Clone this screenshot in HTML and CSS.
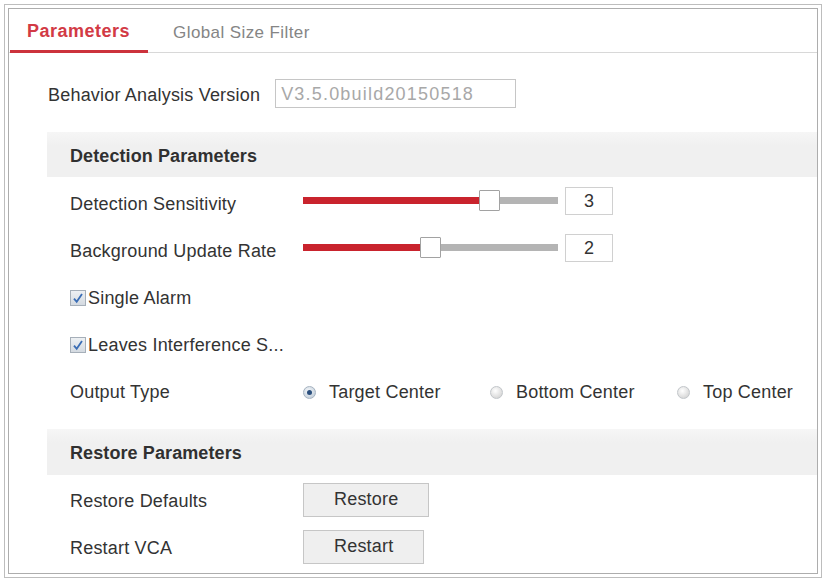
FILE: index.html
```html
<!DOCTYPE html>
<html>
<head>
<meta charset="utf-8">
<link rel="stylesheet" href="styles.css">
</head>
<body>
<div class="frame">
  <div class="panel">
    <div class="tabs">
      <div class="tab active">Parameters</div>
      <div class="tab">Global Size Filter</div>
    </div>
    <div class="content">
      <div class="version-row">
        <span class="version-label">Behavior Analysis Version</span>
        <div class="input-box">V3.5.0build20150518</div>
      </div>

      <div class="section-title">Detection Parameters</div>
      <div class="rows">
        <div class="row">
          <div class="label">Detection Sensitivity</div>
          <div class="slider-control">
            <div class="slider">
              <div class="track"><div class="fill" style="width:186px"></div></div>
              <div class="thumb" style="left:176px"></div>
            </div>
            <div class="value-box">3</div>
          </div>
        </div>
        <div class="row">
          <div class="label">Background Update Rate</div>
          <div class="slider-control">
            <div class="slider">
              <div class="track"><div class="fill" style="width:127px"></div></div>
              <div class="thumb" style="left:117px"></div>
            </div>
            <div class="value-box">2</div>
          </div>
        </div>
        <div class="row">
          <div class="check-label">
            <svg class="checkbox" width="16" height="16" viewBox="0 0 16 16"><defs><linearGradient id="cbg1" x1="0" y1="0" x2="0" y2="1"><stop offset="0" stop-color="#eef1f4"/><stop offset="1" stop-color="#d3d9e0"/></linearGradient></defs><rect x="0.5" y="0.5" width="15" height="15" fill="url(#cbg1)" stroke="#a6afb9"/><path d="M4 8.6 L6.7 11.8 L12 4" fill="none" stroke="#3a6db5" stroke-width="1.8"/></svg>
            <span class="text">Single Alarm</span>
          </div>
        </div>
        <div class="row">
          <div class="check-label">
            <svg class="checkbox" width="16" height="16" viewBox="0 0 16 16"><defs><linearGradient id="cbg2" x1="0" y1="0" x2="0" y2="1"><stop offset="0" stop-color="#eef1f4"/><stop offset="1" stop-color="#d3d9e0"/></linearGradient></defs><rect x="0.5" y="0.5" width="15" height="15" fill="url(#cbg2)" stroke="#a6afb9"/><path d="M4 8.6 L6.7 11.8 L12 4" fill="none" stroke="#3a6db5" stroke-width="1.8"/></svg>
            <span class="text">Leaves Interference S...</span>
          </div>
        </div>
        <div class="row">
          <div class="label">Output Type</div>
          <div class="radio-group">
            <div class="option"><span class="radio checked"></span><span class="text">Target Center</span></div>
            <div class="option"><span class="radio"></span><span class="text">Bottom Center</span></div>
            <div class="option"><span class="radio"></span><span class="text">Top Center</span></div>
          </div>
        </div>
      </div>

      <div class="section-title second">Restore Parameters</div>
      <div class="rows tight">
        <div class="row">
          <div class="label">Restore Defaults</div>
          <button class="btn">Restore</button>
        </div>
        <div class="row">
          <div class="label">Restart VCA</div>
          <button class="btn">Restart</button>
        </div>
      </div>
    </div>
  </div>
</div>
</body>
</html>
```
FILE: styles.css
```css
html, body {
  margin: 0;
  padding: 0;
  background: #ffffff;
}

body {
  font-family: "Liberation Sans", Arial, sans-serif;
  font-size: 18px;
  letter-spacing: 0.2px;
  color: #333333;
}

.frame {
  margin: 4px 0 0 4px;
  width: 818px;
  height: 574px;
  box-sizing: border-box;
  border: 1px solid #bdbdbd;
  padding: 3px;
}

.panel {
  height: 100%;
  box-sizing: border-box;
  border: 1px solid #adadad;
}

.tabs {
  display: flex;
  height: 44px;
  box-sizing: border-box;
  border-bottom: 1px solid #d8d8d8;
}

.tab {
  height: 44px;
  box-sizing: border-box;
  margin-bottom: -1px;
  padding: 4px 0 0 25px;
  display: flex;
  align-items: center;
  font-size: 17px;
  letter-spacing: 0.4px;
  color: #858585;
}

.tab.active {
  margin-left: 1px;
  padding: 4px 18px 0 17px;
  font-size: 18px;
  font-weight: bold;
  letter-spacing: 0.5px;
  color: #d23a45;
  border-bottom: 3px solid #cc323c;
}

.content {
  padding-left: 38px;
}

.version-row {
  margin-top: 26px;
  height: 29px;
  padding-left: 1px;
  display: flex;
  align-items: center;
}

.version-label {
  margin-right: 15px;
  padding-top: 4px;
}

.input-box {
  width: 241px;
  height: 29px;
  box-sizing: border-box;
  border: 1px solid #c6c6c6;
  padding: 1px 0 0 5px;
  line-height: 27px;
  color: #a8a8a8;
  letter-spacing: 1.2px;
}

.section-title {
  margin-top: 24px;
  height: 45px;
  box-sizing: border-box;
  padding: 3px 0 0 23px;
  line-height: 42px;
  background: linear-gradient(#f6f6f6, #f0f0f0 30%, #f0f0f0);
  font-weight: bold;
  letter-spacing: 0.1px;
  color: #303030;
}

.section-title.second {
  margin-top: 15px;
  height: 46px;
  line-height: 43px;
}

.rows {
  padding-top: 2px;
}

.rows.tight {
  padding-top: 1px;
}

.row {
  height: 47px;
  padding-left: 23px;
  display: flex;
  align-items: center;
}

.label {
  width: 233px;
  flex-shrink: 0;
  padding-top: 3px;
}

.text {
  padding-top: 3px;
}

.slider-control {
  display: flex;
  align-items: center;
  margin-top: -4px;
}

.slider {
  position: relative;
  width: 255px;
  height: 21px;
  display: flex;
  align-items: center;
}

.track {
  width: 100%;
  height: 7px;
  background: #b4b4b4;
}

.fill {
  height: 100%;
  background: #c9232d;
}

.thumb {
  position: absolute;
  top: 0;
  width: 21px;
  height: 21px;
  box-sizing: border-box;
  background: #ffffff;
  border: 1px solid #a2a2a2;
  border-radius: 1px;
}

.value-box {
  margin-left: 7px;
  width: 48px;
  height: 28px;
  box-sizing: border-box;
  border: 1px solid #d0d0d0;
  line-height: 26px;
  text-align: center;
}

.check-label {
  display: flex;
  align-items: center;
}

.checkbox {
  display: block;
  margin: 2px 2px 0 0;
}

.radio-group {
  display: grid;
  grid-template-columns: repeat(3, 187px);
}

.option {
  display: flex;
  align-items: center;
}

.radio {
  width: 13px;
  height: 13px;
  box-sizing: border-box;
  margin: 3px 13px 0 0;
  border-radius: 50%;
  border: 1px solid #c2c6ca;
  background: radial-gradient(circle at 40% 35%, #ffffff, #d8d8d8 75%);
  display: flex;
  align-items: center;
  justify-content: center;
}

.radio.checked {
  border-color: #a6b3c1;
  background: radial-gradient(circle at 40% 35%, #f4f7fa, #c6d1dc 75%);
}

.radio.checked::after {
  content: "";
  width: 5px;
  height: 5px;
  border-radius: 50%;
  background: #2b4f7d;
}

.btn {
  height: 34px;
  padding: 0 30px;
  box-sizing: border-box;
  background: #efefef;
  border: 1px solid #c6c6c6;
  border-radius: 0;
  font-family: inherit;
  font-size: 18px;
  letter-spacing: 0.2px;
  color: #333333;
}
```
